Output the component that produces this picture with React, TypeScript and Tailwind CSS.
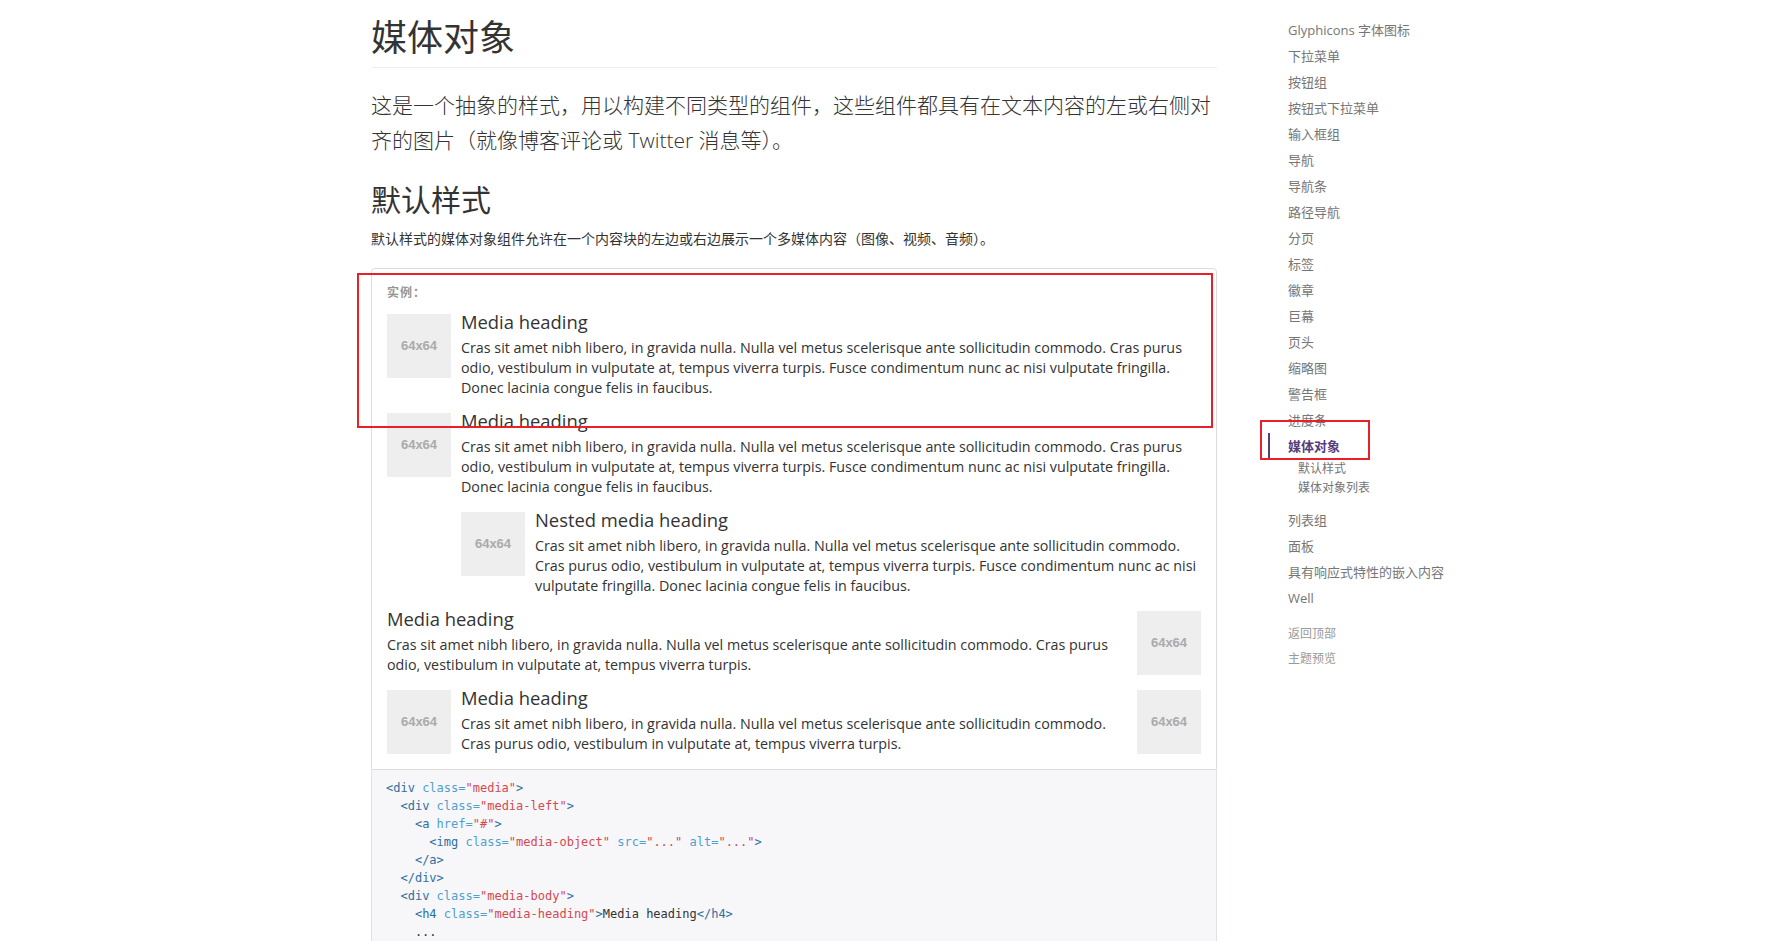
import type { ReactNode } from 'react'

const sideItems = [
  'Glyphicons 字体图标',
  '下拉菜单',
  '按钮组',
  '按钮式下拉菜单',
  '输入框组',
  '导航',
  '导航条',
  '路径导航',
  '分页',
  '标签',
  '徽章',
  '巨幕',
  '页头',
  '缩略图',
  '警告框',
  '进度条',
]

const afterItems = ['列表组', '面板', '具有响应式特性的嵌入内容', 'Well']

const body =
  'Cras sit amet nibh libero, in gravida nulla. Nulla vel metus scelerisque ante sollicitudin commodo. Cras purus odio, vestibulum in vulputate at, tempus viverra turpis. Fusce condimentum nunc ac nisi vulputate fringilla. Donec lacinia congue felis in faucibus.'
const shortBody =
  'Cras sit amet nibh libero, in gravida nulla. Nulla vel metus scelerisque ante sollicitudin commodo. Cras purus odio, vestibulum in vulputate at, tempus viverra turpis.'

function Holder() {
  return (
    <div className="flex h-16 w-16 shrink-0 items-center justify-center bg-[#eee] font-['Liberation_Sans',sans-serif] text-[13px] font-bold text-[#aaa]">
      64x64
    </div>
  )
}

function Media({
  left,
  right,
  title,
  text,
  children,
}: {
  left?: boolean
  right?: boolean
  title: string
  text: string
  children?: ReactNode
}) {
  return (
    <div className="mt-[15px] flex">
      {left && (
        <div className="pr-[10px]">
          <Holder />
        </div>
      )}
      <div className="min-w-0 flex-1">
        <h4 className="-mt-[1.5px] mb-[6.5px] text-[18.4px] leading-[19px] font-normal">{title}</h4>
        <p className="text-[14.3px] leading-[20px]">{text}</p>
        {children}
      </div>
      {right && (
        <div className="pl-[10px]">
          <Holder />
        </div>
      )}
    </div>
  )
}

const Tag = ({ children }: { children: ReactNode }) => <span className="text-[#2f6f9f]">{children}</span>
const Attr = ({ children }: { children: ReactNode }) => <span className="text-[#4f9fcf]">{children}</span>
const Str = ({ children }: { children: ReactNode }) => <span className="text-[#d44950]">{children}</span>

function Code() {
  return (
    <pre className="font-['DejaVu_Sans_Mono',monospace] text-[12px] leading-[18px] text-[#333]">
      <Tag>{'<div'}</Tag> <Attr>class=</Attr>
      <Str>"media"</Str>
      <Tag>{'>'}</Tag>
      {'\n  '}
      <Tag>{'<div'}</Tag> <Attr>class=</Attr>
      <Str>"media-left"</Str>
      <Tag>{'>'}</Tag>
      {'\n    '}
      <Tag>{'<a'}</Tag> <Attr>href=</Attr>
      <Str>"#"</Str>
      <Tag>{'>'}</Tag>
      {'\n      '}
      <Tag>{'<img'}</Tag> <Attr>class=</Attr>
      <Str>"media-object"</Str> <Attr>src=</Attr>
      <Str>"..."</Str> <Attr>alt=</Attr>
      <Str>"..."</Str>
      <Tag>{'>'}</Tag>
      {'\n    '}
      <Tag>{'</a>'}</Tag>
      {'\n  '}
      <Tag>{'</div>'}</Tag>
      {'\n  '}
      <Tag>{'<div'}</Tag> <Attr>class=</Attr>
      <Str>"media-body"</Str>
      <Tag>{'>'}</Tag>
      {'\n    '}
      <Tag>{'<h4'}</Tag> <Attr>class=</Attr>
      <Str>"media-heading"</Str>
      <Tag>{'>'}</Tag>Media heading<Tag>{'</h4>'}</Tag>
      {'\n    ...\n  '}
      <Tag>{'</div>'}</Tag>
      {'\n'}
      <Tag>{'</div>'}</Tag>
    </pre>
  )
}

function Sidebar() {
  return (
    <aside className="-mt-px ml-[51px] w-[263px] shrink-0 text-[13px] leading-[18px] text-[#767676]">
      <ul>
        {sideItems.map((s) => (
          <li key={s}>
            <a className="block py-1 pl-5">{s}</a>
          </li>
        ))}
        <li>
          <a className="block border-l-2 border-[#563d7c] py-1 pl-[18px] font-bold text-[#563d7c]">媒体对象</a>
          <ul className="pb-[10px] text-[12px] leading-[17px]">
            <li>
              <a className="block py-px pl-[30px]">默认样式</a>
            </li>
            <li>
              <a className="block py-px pl-[30px]">媒体对象列表</a>
            </li>
          </ul>
        </li>
        {afterItems.map((s) => (
          <li key={s}>
            <a className="block py-1 pl-5">{s}</a>
          </li>
        ))}
      </ul>
      <a className="mt-[10px] ml-[10px] block px-[10px] py-1 text-[12px] leading-[17px] text-[#999]">返回顶部</a>
      <a className="ml-[10px] block px-[10px] py-1 text-[12px] leading-[17px] text-[#999]">主题预览</a>
    </aside>
  )
}

export default function App() {
  return (
    <div className="relative h-screen overflow-hidden bg-white font-['Open_Sans','Noto_Sans_CJK_SC',sans-serif] text-[#333]">
      <div className="flex pt-[18px] pl-[371px]">
        <main className="w-[846px] shrink-0">
          <h1 className="border-b border-[#eee] pb-[9px] text-[36px] leading-[39.6px] font-normal">媒体对象</h1>
          <p className="mt-[20px] text-[21px] leading-[35px] font-light">
            这是一个抽象的样式，用以构建不同类型的组件，这些组件都具有在文本内容的左或右侧对齐的图片（就像博客评论或 Twitter 消息等）。
          </p>
          <h2 className="mt-[25px] text-[30px] leading-[33px] font-normal">默认样式</h2>
          <p className="mt-[13px] text-[14px] leading-[20px]">
            默认样式的媒体对象组件允许在一个内容块的左边或右边展示一个多媒体内容（图像、视频、音频）。
          </p>

          <div className="mt-[19px] rounded-t-[4px] border border-[#ddd] p-[15px]">
            <div className="text-[12px] leading-[17px] font-bold tracking-[1px] text-[#959595]">实例：</div>
            <div className="-mt-[2px]">
              <Media left title="Media heading" text={body} />
              <Media left title="Media heading" text={body}>
                <Media left title="Nested media heading" text={body} />
              </Media>
              <Media right title="Media heading" text={shortBody} />
              <Media left right title="Media heading" text={shortBody} />
            </div>
          </div>
          <div className="border-x border-b border-[#e1e1e8] bg-[#f7f7f9] px-[14px] py-[9px]">
            <Code />
          </div>
        </main>
        <Sidebar />
      </div>

      {/* red annotation boxes from the screenshot */}
      <div className="pointer-events-none absolute left-[357px] top-[273px] h-[155px] w-[856px] border-2 border-[#e8202a]" />
      <div className="pointer-events-none absolute left-[1260px] top-[420px] h-[40px] w-[110px] border-2 border-[#e8202a]" />
    </div>
  )
}
